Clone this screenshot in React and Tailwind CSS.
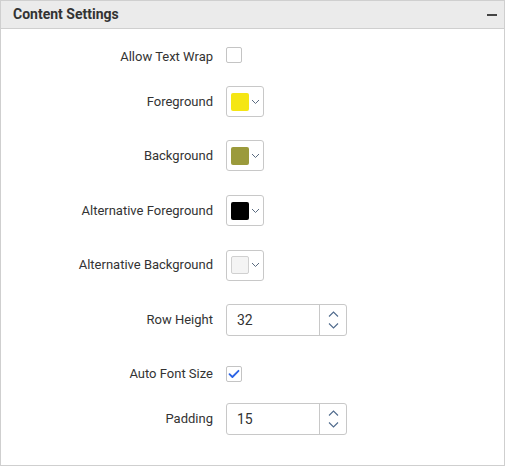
import React from "react";

function Label({ children, extra = "" }) {
  return (
    <div className={`w-[213px] shrink-0 pr-[1px] text-right text-[13px] text-[#333] ${extra}`}>{children}</div>
  );
}

function Row({ h, label, children, labelExtra }) {
  return (
    <div className={`flex items-center ${h}`}>
      <Label extra={labelExtra}>{label}</Label>
      <div className="ml-[12px] flex items-center">{children}</div>
    </div>
  );
}

function Checkbox({ checked }) {
  return (
    <div className="flex h-[16px] w-[16px] items-center justify-center rounded-[2px] border border-[#c4c4c4] bg-white">
      {checked && (
        <svg width="12" height="10" viewBox="0 0 12 10">
          <path d="M1.5 5.2 L4.4 8 L10.5 1.8" fill="none" stroke="#2b63e6" strokeWidth="1.8" strokeLinecap="round" strokeLinejoin="round" />
        </svg>
      )}
    </div>
  );
}

function ColorPicker({ color, bordered }) {
  return (
    <div className="flex h-[31px] w-[38px] items-center rounded-[3px] border border-[#c8c8c8] bg-white pl-[4px]">
      <div
        className={`h-[18px] w-[18px] rounded-[2px] ${bordered ? "border border-[#d0d0d0]" : ""}`}
        style={{ backgroundColor: color }}
      />
      <svg className="ml-[2px]" width="9" height="6" viewBox="0 0 9 6">
        <path d="M1 1 L4.5 4.5 L8 1" fill="none" stroke="#5a6b80" strokeWidth="1" />
      </svg>
    </div>
  );
}

function Numeric({ value }) {
  return (
    <div className="flex h-[32px] w-[121px] items-stretch rounded-[3px] border border-[#c8c8c8] bg-white">
      <div className="flex flex-1 items-center pl-[10px] text-[14px] text-[#333]">{value}</div>
      <div className="flex w-[27px] flex-col items-center justify-center gap-[6px] border-l border-[#c8c8c8]">
        <svg width="11" height="6" viewBox="0 0 11 6">
          <path d="M1 5.5 L5.5 1 L10 5.5" fill="none" stroke="#4f6a8c" strokeWidth="1.1" />
        </svg>
        <svg width="11" height="6" viewBox="0 0 11 6">
          <path d="M1 0.5 L5.5 5 L10 0.5" fill="none" stroke="#4f6a8c" strokeWidth="1.1" />
        </svg>
      </div>
    </div>
  );
}

export default function App() {
  return (
    <div
      className="h-[466px] w-[505px] bg-white"
      style={{ fontFamily: "Roboto, 'Liberation Sans', sans-serif" }}
    >
      <div className="flex h-[466px] w-[505px] flex-col border border-[#cfcfcf]">
        <div className="flex h-[28px] shrink-0 items-center justify-between border-b border-[#cfcfcf] bg-[#ebebeb] pl-[12px] pr-[7px]">
          <span className="text-[14px] font-bold text-[#333]">Content Settings</span>
          <div className="h-[2px] w-[10px] bg-[#444]" />
        </div>
        <div className="flex flex-col pt-[6px]">
          <Row h="h-[40px]" label="Allow Text Wrap" labelExtra="pt-[4px]">
            <Checkbox />
          </Row>
          <Row h="h-[53px]" label="Foreground">
            <ColorPicker color="#f5e614" />
          </Row>
          <Row h="h-[55px]" label="Background">
            <ColorPicker color="#9b9a3b" />
          </Row>
          <Row h="h-[55px]" label="Alternative Foreground">
            <ColorPicker color="#000000" />
          </Row>
          <Row h="h-[54px]" label="Alternative Background">
            <ColorPicker color="#f4f4f4" bordered />
          </Row>
          <Row h="h-[56px]" label="Row Height">
            <Numeric value="32" />
          </Row>
          <Row h="h-[51px]" label="Auto Font Size" labelExtra="pt-[1px]">
            <Checkbox checked />
          </Row>
          <Row h="h-[40px]" label="Padding">
            <Numeric value="15" />
          </Row>
        </div>
      </div>
    </div>
  );
}
